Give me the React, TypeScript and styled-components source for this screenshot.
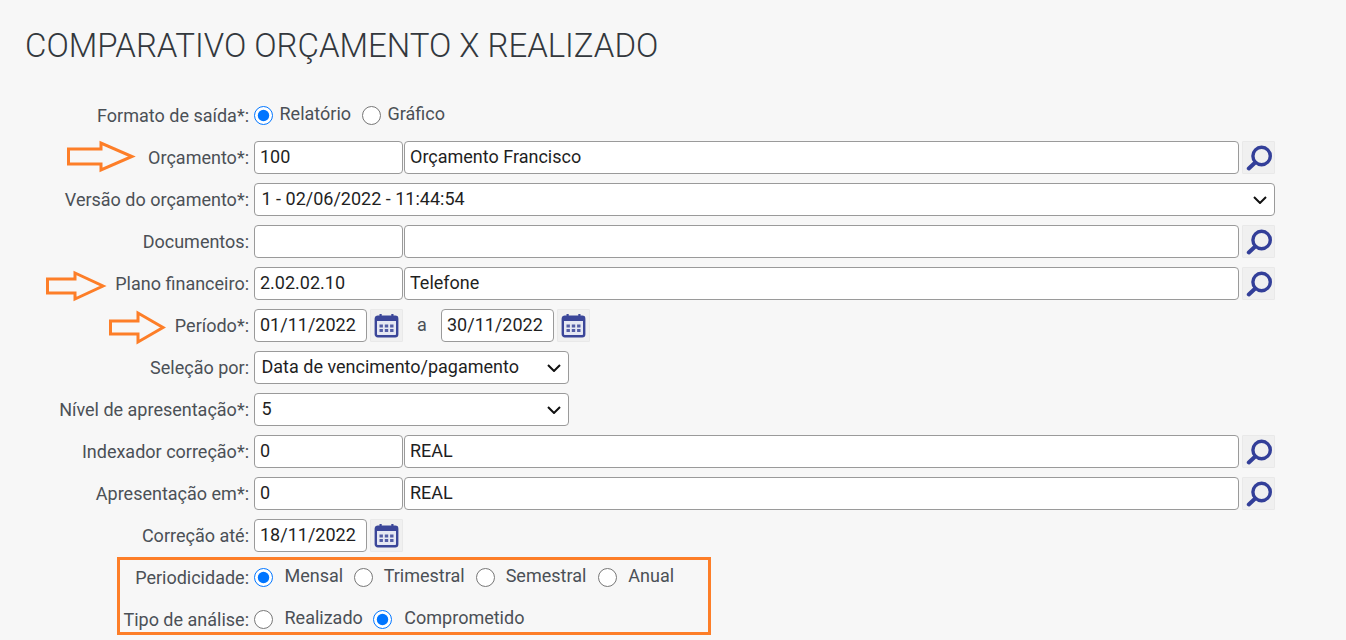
import React from "react";
import styled, { createGlobalStyle } from "styled-components";

const Global = createGlobalStyle`
  html, body { margin: 0; padding: 0; background: #f7f7f7; }
  body { font-family: Roboto, "Liberation Sans", sans-serif; color: #4a4f55; overflow: hidden; }
`;

const chevron = encodeURIComponent(
  '<svg xmlns="http://www.w3.org/2000/svg" width="14" height="8" viewBox="0 0 14 8"><path d="M1 1L7 7L13 1" fill="none" stroke="#111" stroke-width="2"/></svg>'
);

const Page = styled.div`
  position: relative;
  width: 1346px;
  height: 640px;
  overflow: hidden;
  padding: 26px 0 0 25px;
  box-sizing: border-box;
`;
const Title = styled.h1`
  margin: 0 0 33px;
  font-size: 33px;
  line-height: 40px;
  font-weight: 300;
  letter-spacing: -0.03px;
  color: #33383d;
`;
const Form = styled.div`
  display: flex;
  flex-direction: column;
  margin-left: -25px;
`;
const Row = styled.div`
  display: flex;
  align-items: center;
  height: 33px;
  margin-bottom: 9px;
`;
const Label = styled.label`
  width: 249px;
  flex: none;
  text-align: right;
  font-size: 18px;
  line-height: 22px;
  margin-right: 5px;
  color: #4b5056;
`;
const Text = styled.input<{ $w: number }>`
  width: ${(p) => p.$w}px;
  height: 33px;
  box-sizing: border-box;
  flex: none;
  margin: 0 1px 0 0;
  padding: 0 5px 2px;
  background: #fff;
  border: 1px solid #9a9a9a;
  border-radius: 4px;
  font: 18px Roboto, sans-serif;
  color: #1f1f1f;
  outline: none;
`;
const Select = styled.select<{ $w: number }>`
  width: ${(p) => p.$w}px;
  height: 33px;
  box-sizing: border-box;
  appearance: none;
  background: #fff url("data:image/svg+xml,${chevron}") no-repeat right 7px center / 14px 8px;
  border: 1px solid #9a9a9a;
  border-radius: 4px;
  font: 18px Roboto, sans-serif;
  color: #1f1f1f;
  padding: 0 24px 2px 6.5px;
  outline: none;
`;
const IconButton = styled.button<{ $ml: number }>`
  width: 33px;
  height: 33px;
  flex: none;
  margin-left: ${(p) => p.$ml}px;
  padding: 0;
  display: flex;
  align-items: center;
  justify-content: center;
  background: #f0f0f0;
  border: 1px solid #e9e9e9;
  border-radius: 1px;
`;
const Sep = styled.span`
  width: 10px;
  margin: -2px 14px 0 14px;
  font-size: 18px;
  color: #4b5056;
`;
const RadioLabel = styled.span<{ $ml: number; $mr: number }>`
  font-size: 18px;
  line-height: 22px;
  color: #4b5056;
  margin: -3px ${(p) => p.$mr}px 0 ${(p) => p.$ml}px;
`;
const Radio = styled.input.attrs({ type: "radio" })`
  width: 19px;
  height: 19px;
  margin: 0;
  flex: none;
  accent-color: #0075ff;
`;
const Highlight = styled.div`
  position: absolute;
  left: 117px;
  top: 557px;
  width: 594px;
  height: 78px;
  box-sizing: border-box;
  border: 3px solid #fd7e28;
  pointer-events: none;
`;
const Arrow = styled.svg<{ $x: number; $y: number }>`
  position: absolute;
  left: ${(p) => p.$x}px;
  top: ${(p) => p.$y}px;
  pointer-events: none;
`;

const Search = () => (
  <svg width="27" height="27" viewBox="0 0 27 27" fill="none" stroke="#333f99">
    <circle cx="16.6" cy="12" r="8.7" strokeWidth="3.4" />
    <path d="M10.2 18.5L3.8 24.5" strokeWidth="4" strokeLinecap="round" />
  </svg>
);
const Calendar = () => (
  <svg width="25" height="25" viewBox="0 0 25 25">
    <rect x="1.8" y="3.8" width="21.4" height="19.4" rx="2" fill="#e6e8f3" stroke="#3b4699" strokeWidth="2.4" />
    <rect x="1.5" y="3.5" width="22" height="4.5" fill="#3b4699" />
    <rect x="5.5" y="1" width="2.2" height="4" fill="#3b4699" />
    <rect x="17.3" y="1" width="2.2" height="4" fill="#3b4699" />
    <g fill="#3b4699" opacity="0.85">
      <rect x="5.5" y="11.5" width="3.4" height="3" /><rect x="10.8" y="11.5" width="3.4" height="3" /><rect x="16.1" y="11.5" width="3.4" height="3" />
      <rect x="5.5" y="16" width="3.4" height="3" /><rect x="10.8" y="16" width="3.4" height="3" /><rect x="16.1" y="16" width="3.4" height="3" />
    </g>
  </svg>
);
const OutlineArrow = ({ x, y, w, h, head, body }: { x: number; y: number; w: number; h: number; head: number; body: number }) => {
  const mid = h / 2;
  const top = mid - body / 2;
  const bot = mid + body / 2;
  const d = `M1.5 ${top}H${head}V3L${w - 4} ${mid}L${head} ${h - 3}V${bot}H1.5Z`;
  return (
    <Arrow $x={x} $y={y} width={w} height={h} viewBox={`0 0 ${w} ${h}`}>
      <path d={d} fill="none" stroke="#fd7e28" strokeWidth="3" />
    </Arrow>
  );
};

const noop = () => {};
const Lookup = ({ label, code, name }: { label: string; code: string; name: string }) => (
  <Row>
    <Label>{label}</Label>
    <Text $w={149} value={code} onChange={noop} />
    <Text $w={835} value={name} onChange={noop} />
    <IconButton $ml={2}><Search /></IconButton>
  </Row>
);

export default function App() {
  return (
    <Page>
      <Global />
      <Title>COMPARATIVO ORÇAMENTO X REALIZADO</Title>
      <Form>
        <Row>
          <Label>Formato de saída*:</Label>
          <Radio name="f" defaultChecked />
          <RadioLabel $ml={6.5} $mr={10.5}>Relatório</RadioLabel>
          <Radio name="f" />
          <RadioLabel $ml={7} $mr={0}>Gráfico</RadioLabel>
        </Row>
        <Lookup label="Orçamento*:" code="100" name="Orçamento Francisco" />
        <Row>
          <Label>Versão do orçamento*:</Label>
          <Select $w={1021}><option>1 - 02/06/2022 - 11:44:54</option></Select>
        </Row>
        <Lookup label="Documentos:" code="" name="" />
        <Lookup label="Plano financeiro:" code="2.02.02.10" name="Telefone" />
        <Row>
          <Label>Período*:</Label>
          <Text $w={113} value="01/11/2022" onChange={noop} />
          <IconButton $ml={2}><Calendar /></IconButton>
          <Sep>a</Sep>
          <Text $w={113} value="30/11/2022" onChange={noop} />
          <IconButton $ml={2}><Calendar /></IconButton>
        </Row>
        <Row>
          <Label>Seleção por:</Label>
          <Select $w={315}><option>Data de vencimento/pagamento</option></Select>
        </Row>
        <Row>
          <Label>Nível de apresentação*:</Label>
          <Select $w={315}><option>5</option></Select>
        </Row>
        <Lookup label="Indexador correção*:" code="0" name="REAL" />
        <Lookup label="Apresentação em*:" code="0" name="REAL" />
        <Row>
          <Label>Correção até:</Label>
          <Text $w={113} value="18/11/2022" onChange={noop} />
          <IconButton $ml={2}><Calendar /></IconButton>
        </Row>
        <Row>
          <Label>Periodicidade:</Label>
          <Radio name="p" defaultChecked />
          <RadioLabel $ml={11.5} $mr={10.5}>Mensal</RadioLabel>
          <Radio name="p" />
          <RadioLabel $ml={11} $mr={11}>Trimestral</RadioLabel>
          <Radio name="p" />
          <RadioLabel $ml={11} $mr={12}>Semestral</RadioLabel>
          <Radio name="p" />
          <RadioLabel $ml={11} $mr={0}>Anual</RadioLabel>
        </Row>
        <Row>
          <Label>Tipo de análise:</Label>
          <Radio name="t" />
          <RadioLabel $ml={11.5} $mr={10.5}>Realizado</RadioLabel>
          <Radio name="t" defaultChecked />
          <RadioLabel $ml={12} $mr={0}>Comprometido</RadioLabel>
        </Row>
      </Form>
      <OutlineArrow x={67} y={140} w={69} h={33} head={34} body={15} />
      <OutlineArrow x={46} y={270} w={61} h={32} head={29} body={14} />
      <OutlineArrow x={109} y={310} w={58} h={35} head={29} body={13} />
      <Highlight />
    </Page>
  );
}
